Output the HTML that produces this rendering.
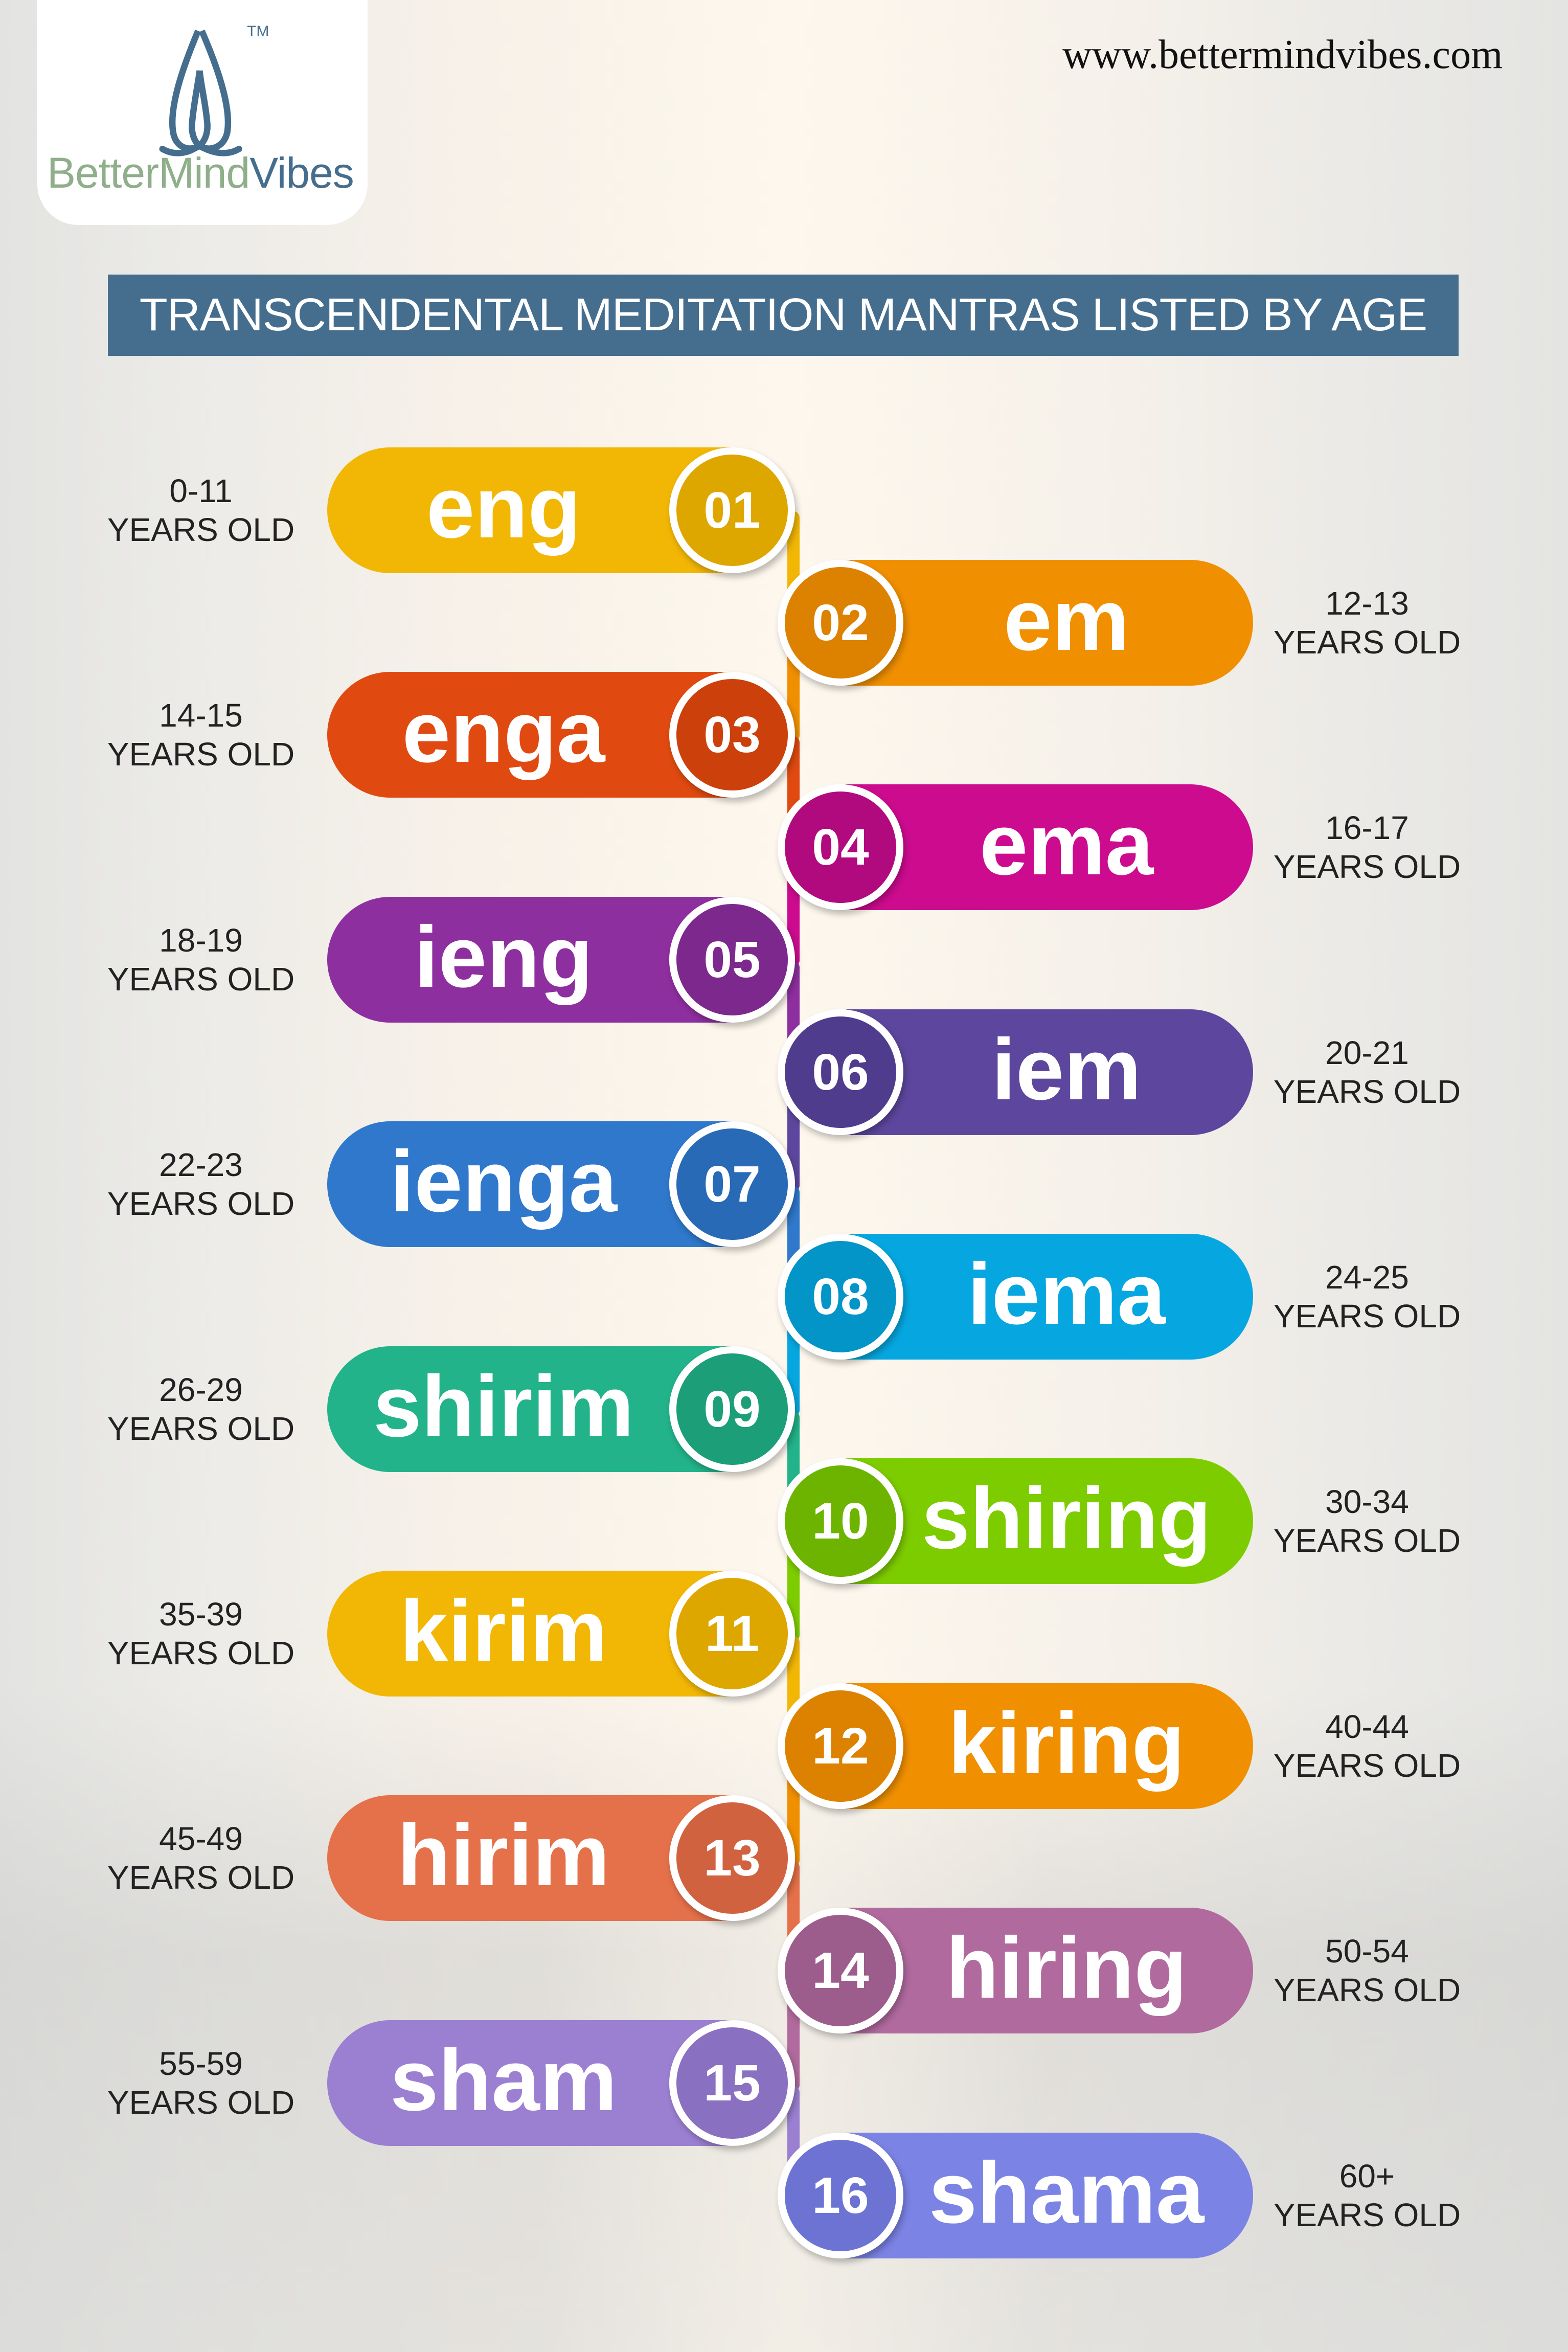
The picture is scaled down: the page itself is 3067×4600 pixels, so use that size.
<!DOCTYPE html>
<html><head><meta charset="utf-8"><style>
body{margin:0;width:3067px;height:4600px;overflow:hidden;position:relative;font-family:"Liberation Sans",sans-serif;
background:linear-gradient(90deg,#e3e3e1 0%,#ecebe8 12%,#f7f1e9 30%,#fbf4ea 50%,#f6f1ea 70%,#eae9e6 88%,#e4e4e2 100%);}
.bgshade{position:absolute;left:0;top:3300px;width:3067px;height:1300px;background:linear-gradient(180deg,rgba(210,210,208,0) 0%,rgba(205,205,203,0.55) 40%,rgba(215,215,213,0.6) 100%);}
.logo{position:absolute;left:73px;top:0;width:646px;height:440px;background:#fff;border-radius:0 0 80px 80px;}
.brand{position:absolute;left:92px;top:290px;font-size:84px;letter-spacing:-1px;}
.url{position:absolute;left:2078px;top:62px;font-family:"Liberation Serif",serif;font-size:80px;color:#111;}
.title{position:absolute;left:211px;top:537px;width:2642px;height:159px;background:#456e8e;color:#fff;font-size:90px;line-height:159px;text-align:center;letter-spacing:-1px;}
.pill{position:absolute;width:910px;height:246px;border-radius:123px;}
.L{left:640px}.R{left:1541px}
.m{position:absolute;top:0;height:246px;line-height:236px;width:690px;text-align:center;color:#fff;font-weight:bold;font-size:170px;}
.L .m{left:0}.R .m{left:200px}
.c{position:absolute;top:0;width:218px;height:218px;border:14px solid #fff;border-radius:50%;color:#fff;font-weight:bold;font-size:100px;line-height:218px;text-align:center;box-shadow:4px 8px 12px rgba(0,0,0,0.25);z-index:2}
.L .c{left:669px}.R .c{left:-20px}
.lab{position:absolute;width:500px;text-align:center;font-size:64px;line-height:76px;color:#222;}
.ll{left:143px}.lr{left:2424px}
.con{position:absolute;left:1540px;width:24px;height:230px;border-radius:12px;}
</style></head><body>
<div class="bgshade"></div>
<div style="position:absolute;left:1050px;top:0;width:1000px;height:4600px;background:linear-gradient(90deg,rgba(255,250,240,0),rgba(255,250,240,0.5),rgba(255,250,240,0))"></div>
<div class="logo">
<svg style="position:absolute;left:200px;top:50px" width="260" height="260" viewBox="0 0 240 250">
<path d="M105 10 C80 70 50 150 58 200 C62 225 80 235 100 230 C115 225 125 205 122 180 C118 140 110 110 108 85 C105 110 98 140 94 180 C91 205 100 225 115 230 C135 235 155 225 160 200 C168 150 138 70 112 10" fill="none" stroke="#456e8e" stroke-width="12"/>
<path d="M38 232 C60 245 85 240 100 230 M115 230 C135 240 160 245 182 232" fill="none" stroke="#456e8e" stroke-width="12" stroke-linecap="round"/>
</svg>
<div style="position:absolute;left:410px;top:45px;font-size:30px;color:#456e8e">TM</div>
</div>
<div class="brand"><span style="color:#8fae8a">BetterMind</span><span style="color:#456e8e">Vibes</span></div>
<div class="url">www.bettermindvibes.com</div>
<div class="title">TRANSCENDENTAL MEDITATION MANTRAS LISTED BY AGE</div>

<div class="con" style="top:1000px;background:#f2b705"></div>
<div class="con" style="top:1220px;background:#f08f00"></div>
<div class="con" style="top:1440px;background:#e04a10"></div>
<div class="con" style="top:1660px;background:#cc0b8f"></div>
<div class="con" style="top:1880px;background:#8e2f9f"></div>
<div class="con" style="top:2100px;background:#5d479e"></div>
<div class="con" style="top:2320px;background:#2f78cc"></div>
<div class="con" style="top:2540px;background:#06a7e0"></div>
<div class="con" style="top:2760px;background:#22b38a"></div>
<div class="con" style="top:2980px;background:#7dcc00"></div>
<div class="con" style="top:3200px;background:#f2b705"></div>
<div class="con" style="top:3420px;background:#f08f00"></div>
<div class="con" style="top:3640px;background:#e5714a"></div>
<div class="con" style="top:3860px;background:#b06a9e"></div>
<div class="con" style="top:4080px;background:#9b80d2"></div>

<div class="pill L" style="top:875px;background:#f2b705"><div class="m">eng</div><div class="c" style="background:#dea700">01</div></div>
<div class="lab ll" style="top:922px">0-11<br>YEARS OLD</div>
<div class="pill R" style="top:1095px;background:#f08f00"><div class="c" style="background:#dc8200">02</div><div class="m">em</div></div>
<div class="lab lr" style="top:1142px">12-13<br>YEARS OLD</div>
<div class="pill L" style="top:1314px;background:#e04a10"><div class="m">enga</div><div class="c" style="background:#cc400c">03</div></div>
<div class="lab ll" style="top:1361px">14-15<br>YEARS OLD</div>
<div class="pill R" style="top:1534px;background:#cc0b8f"><div class="c" style="background:#b00a7e">04</div><div class="m">ema</div></div>
<div class="lab lr" style="top:1581px">16-17<br>YEARS OLD</div>
<div class="pill L" style="top:1754px;background:#8e2f9f"><div class="m">ieng</div><div class="c" style="background:#7c288c">05</div></div>
<div class="lab ll" style="top:1801px">18-19<br>YEARS OLD</div>
<div class="pill R" style="top:1974px;background:#5d479e"><div class="c" style="background:#503c8c">06</div><div class="m">iem</div></div>
<div class="lab lr" style="top:2021px">20-21<br>YEARS OLD</div>
<div class="pill L" style="top:2193px;background:#2f78cc"><div class="m">ienga</div><div class="c" style="background:#286ab6">07</div></div>
<div class="lab ll" style="top:2240px">22-23<br>YEARS OLD</div>
<div class="pill R" style="top:2413px;background:#06a7e0"><div class="c" style="background:#0394c8">08</div><div class="m">iema</div></div>
<div class="lab lr" style="top:2460px">24-25<br>YEARS OLD</div>
<div class="pill L" style="top:2633px;background:#22b38a"><div class="m">shirim</div><div class="c" style="background:#1c9e78">09</div></div>
<div class="lab ll" style="top:2680px">26-29<br>YEARS OLD</div>
<div class="pill R" style="top:2852px;background:#7dcc00"><div class="c" style="background:#6cb400">10</div><div class="m">shiring</div></div>
<div class="lab lr" style="top:2899px">30-34<br>YEARS OLD</div>
<div class="pill L" style="top:3072px;background:#f2b705"><div class="m">kirim</div><div class="c" style="background:#dea700">11</div></div>
<div class="lab ll" style="top:3119px">35-39<br>YEARS OLD</div>
<div class="pill R" style="top:3292px;background:#f08f00"><div class="c" style="background:#dc8200">12</div><div class="m">kiring</div></div>
<div class="lab lr" style="top:3339px">40-44<br>YEARS OLD</div>
<div class="pill L" style="top:3511px;background:#e5714a"><div class="m">hirim</div><div class="c" style="background:#d16240">13</div></div>
<div class="lab ll" style="top:3558px">45-49<br>YEARS OLD</div>
<div class="pill R" style="top:3731px;background:#b06a9e"><div class="c" style="background:#9c5c8c">14</div><div class="m">hiring</div></div>
<div class="lab lr" style="top:3778px">50-54<br>YEARS OLD</div>
<div class="pill L" style="top:3951px;background:#9b80d2"><div class="m">sham</div><div class="c" style="background:#8a70c0">15</div></div>
<div class="lab ll" style="top:3998px">55-59<br>YEARS OLD</div>
<div class="pill R" style="top:4171px;background:#7b83e4"><div class="c" style="background:#6c73d2">16</div><div class="m">shama</div></div>
<div class="lab lr" style="top:4218px">60+<br>YEARS OLD</div>
</body></html>
